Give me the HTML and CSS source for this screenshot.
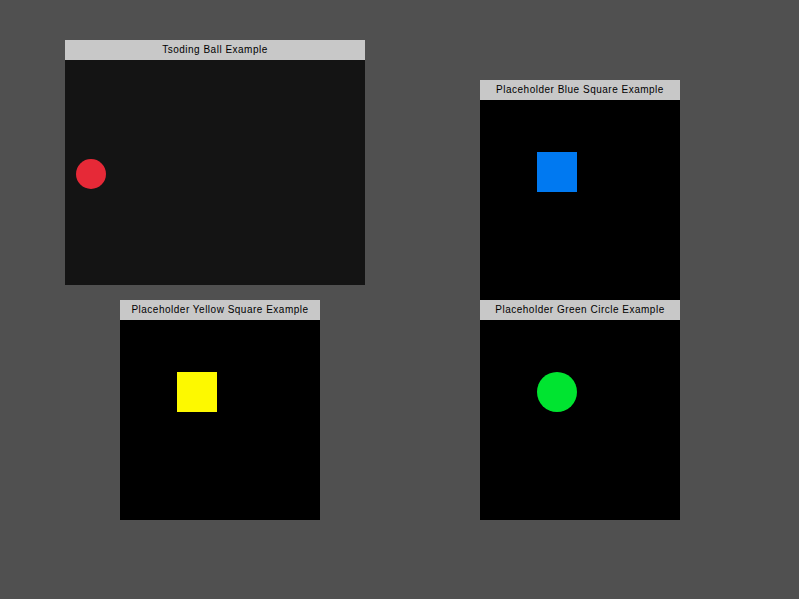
FILE: index.html
```html
<!DOCTYPE html>
<html>
<head>
<meta charset="utf-8">
<link rel="stylesheet" href="styles.css">
</head>
<body>
<div class="desktop">
  <div class="window win-ball">
    <div class="titlebar">Tsoding Ball Example</div>
    <div class="canvas dark">
      <div class="shape ball"></div>
    </div>
  </div>
  <div class="window win-blue">
    <div class="titlebar">Placeholder Blue Square Example</div>
    <div class="canvas">
      <div class="shape square blue"></div>
    </div>
  </div>
  <div class="window win-yellow">
    <div class="titlebar">Placeholder Yellow Square Example</div>
    <div class="canvas">
      <div class="shape square yellow"></div>
    </div>
  </div>
  <div class="window win-green">
    <div class="titlebar">Placeholder Green Circle Example</div>
    <div class="canvas">
      <div class="shape circle green"></div>
    </div>
  </div>
</div>
</body>
</html>
```
FILE: styles.css
```css
html, body {
  margin: 0;
  padding: 0;
}
body {
  background: #505050;
  font-family: "Liberation Sans", sans-serif;
}
.desktop {
  position: relative;
  width: 799px;
  height: 599px;
  overflow: hidden;
}
.window {
  position: absolute;
  display: flex;
  flex-direction: column;
}
.titlebar {
  height: 20px;
  background: #c8c8c8;
  color: #000;
  font-size: 10px;
  line-height: 20px;
  text-align: center;
  letter-spacing: 0.5px;
  white-space: nowrap;
}
.canvas {
  position: relative;
  flex: 1;
  background: #000;
}
.canvas.dark {
  background: #141414;
}
.win-ball { left: 65px; top: 40px; width: 300px; height: 245px; }
.win-blue { left: 480px; top: 80px; width: 200px; height: 220px; }
.win-yellow { left: 120px; top: 300px; width: 200px; height: 220px; }
.win-green { left: 480px; top: 300px; width: 200px; height: 220px; }
.shape { position: absolute; }
.ball {
  left: 11px; top: 99px;
  width: 30px; height: 30px;
  border-radius: 50%;
  background: #e62937;
}
.square {
  left: 57px; top: 52px;
  width: 40px; height: 40px;
}
.blue { background: #0079f1; }
.yellow { background: #fdf900; }
.circle {
  left: 57px; top: 52px;
  width: 40px; height: 40px;
  border-radius: 50%;
}
.green { background: #00e430; }
```
